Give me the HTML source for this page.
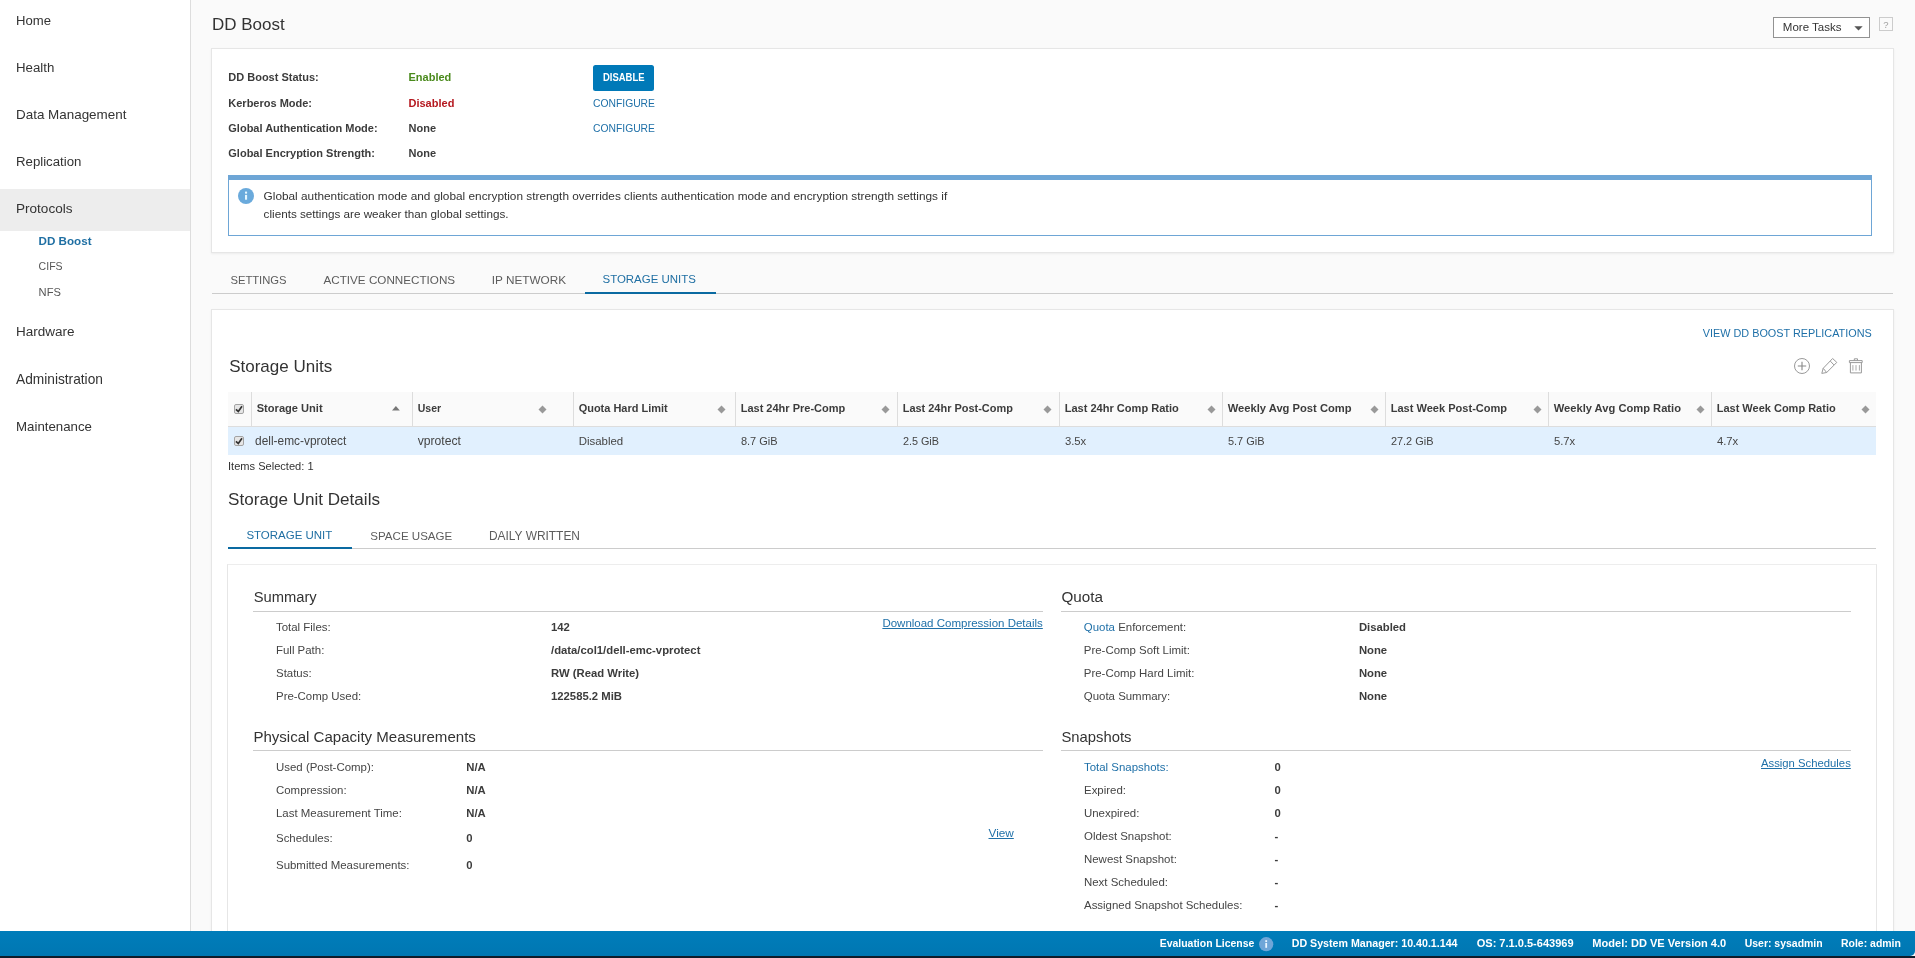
<!DOCTYPE html>
<html><head><meta charset="utf-8"><style>
html,body{margin:0;padding:0;}
body{width:1915px;height:958px;overflow:hidden;position:relative;background:#fafafa;font-family:"Liberation Sans",sans-serif;}
.t{position:absolute;white-space:nowrap;}
.r{position:absolute;}
</style></head><body><div id="wrap" style="position:absolute;left:0;top:0;width:1915px;height:958px;will-change:transform;">
<div class="r" style="left:0px;top:0px;width:190px;height:958px;background:#fff;"></div>
<div class="r" style="left:190px;top:0px;width:1px;height:958px;background:#ddd;"></div>
<div class="r" style="left:0px;top:189px;width:190px;height:42px;background:#ededed;"></div>
<div class="t" style="top:14px;font-size:13.12px;line-height:13.12px;color:#333;left:16.00px;">Home</div>
<div class="t" style="top:61px;font-size:13.25px;line-height:13.25px;color:#333;left:16.00px;">Health</div>
<div class="t" style="top:108px;font-size:13.43px;line-height:13.43px;color:#333;left:16.00px;">Data Management</div>
<div class="t" style="top:155px;font-size:13.22px;line-height:13.22px;color:#333;left:16.00px;">Replication</div>
<div class="t" style="top:202px;font-size:13.55px;line-height:13.55px;color:#333;left:16.00px;">Protocols</div>
<div class="t" style="top:325px;font-size:13.49px;line-height:13.49px;color:#333;left:16.00px;">Hardware</div>
<div class="t" style="top:373px;font-size:13.73px;line-height:13.73px;color:#333;left:16.00px;">Administration</div>
<div class="t" style="top:420px;font-size:13.27px;line-height:13.27px;color:#333;left:16.00px;">Maintenance</div>
<div class="t" style="top:235px;font-size:11.63px;line-height:11.63px;color:#1f6fa3;font-weight:bold;left:38.60px;">DD Boost</div>
<div class="t" style="top:261px;font-size:10.54px;line-height:10.54px;color:#565656;left:38.60px;">CIFS</div>
<div class="t" style="top:287px;font-size:11.15px;line-height:11.15px;color:#565656;left:38.60px;">NFS</div>
<div class="t" style="top:16px;font-size:16.99px;line-height:16.99px;color:#333;left:212.00px;">DD Boost</div>
<div class="r" style="left:1773px;top:17px;width:97px;height:21px;background:#fff;border:1px solid #929292;box-sizing:border-box;"></div>
<div class="t" style="top:22px;font-size:11.52px;line-height:11.52px;color:#333;left:1782.80px;">More Tasks</div>
<svg class="r" style="left:1854px;top:25.5px" width="9" height="5"><path d="M0.3 0.3 L8.7 0.3 L4.5 4.6 Z" fill="#555"/></svg>
<div class="r" style="left:1879px;top:17px;width:14px;height:14px;border:1px solid #ccc;box-sizing:border-box;background:#fafafa;"></div>
<div class="t" style="top:20px;font-size:9.5px;line-height:9.5px;color:#a0a0a0;left:1883.30px;">?</div>
<div class="r" style="left:211px;top:48px;width:1683px;height:205px;background:#fff;border:1px solid #e6e6e6;box-sizing:border-box;box-shadow:0 1px 2px rgba(0,0,0,0.06);"></div>
<div class="t" style="top:72px;font-size:11px;line-height:11px;color:#3c3c3c;font-weight:bold;left:228.30px;">DD Boost Status:</div>
<div class="t" style="top:72px;font-size:11px;line-height:11px;color:#4a8a1c;font-weight:bold;left:408.50px;">Enabled</div>
<div class="t" style="top:98px;font-size:11px;line-height:11px;color:#3c3c3c;font-weight:bold;left:228.30px;">Kerberos Mode:</div>
<div class="t" style="top:98px;font-size:11px;line-height:11px;color:#b5181f;font-weight:bold;left:408.50px;">Disabled</div>
<div class="t" style="top:123px;font-size:11px;line-height:11px;color:#3c3c3c;font-weight:bold;left:228.30px;">Global Authentication Mode:</div>
<div class="t" style="top:123px;font-size:11px;line-height:11px;color:#3c3c3c;font-weight:bold;left:408.50px;">None</div>
<div class="t" style="top:148px;font-size:11px;line-height:11px;color:#3c3c3c;font-weight:bold;left:228.30px;">Global Encryption Strength:</div>
<div class="t" style="top:148px;font-size:11px;line-height:11px;color:#3c3c3c;font-weight:bold;left:408.50px;">None</div>
<div class="r" style="left:593px;top:65px;width:61px;height:26px;background:#0079b8;border-radius:2.5px;"></div>
<div class="t" style="top:72px;font-size:10.6px;line-height:10.6px;color:#fff;font-weight:bold;left:602.60px;transform:scaleX(0.892);transform-origin:0 0;">DISABLE</div>
<div class="t" style="top:99px;font-size:10.33px;line-height:10.33px;color:#1f70a8;left:593.00px;">CONFIGURE</div>
<div class="t" style="top:124px;font-size:10.33px;line-height:10.33px;color:#1f70a8;left:593.00px;">CONFIGURE</div>
<div class="r" style="left:228px;top:175px;width:1644px;height:61px;background:#fff;border:1px solid #6ea6d6;border-top:5px solid #6ea6d6;box-sizing:border-box;"></div>
<svg class="r" style="left:238px;top:188px" width="16" height="16"><circle cx="8" cy="8" r="8" fill="#6aaadc"/><rect x="7" y="6.9" width="2.1" height="4.8" fill="#e6f7ff"/><rect x="7" y="3.4" width="2.1" height="2.3" rx="0.6" fill="#e6f7ff"/></svg>
<div class="t" style="top:191px;font-size:11.82px;line-height:11.82px;color:#333;left:263.60px;">Global authentication mode and global encryption strength overrides clients authentication mode and encryption strength settings if</div>
<div class="t" style="top:208px;font-size:11.69px;line-height:11.69px;color:#333;left:263.60px;">clients settings are weaker than global settings.</div>
<div class="r" style="left:212px;top:293px;width:1681px;height:1px;background:#ccc;"></div>
<div class="t" style="top:275px;font-size:11.24px;line-height:11.24px;color:#5c5c5c;left:230.40px;">SETTINGS</div>
<div class="t" style="top:274px;font-size:11.68px;line-height:11.68px;color:#5c5c5c;left:323.50px;">ACTIVE CONNECTIONS</div>
<div class="t" style="top:274px;font-size:11.78px;line-height:11.78px;color:#5c5c5c;left:491.80px;">IP NETWORK</div>
<div class="t" style="top:274px;font-size:11.46px;line-height:11.46px;color:#1f6fa3;left:602.50px;">STORAGE UNITS</div>
<div class="r" style="left:585px;top:292px;width:131px;height:2px;background:#0a6aa1;"></div>
<div class="r" style="left:211px;top:309px;width:1683px;height:640px;background:#fff;border:1px solid #e6e6e6;box-sizing:border-box;box-shadow:0 1px 2px rgba(0,0,0,0.06);"></div>
<div class="t" style="top:328px;font-size:10.85px;line-height:10.85px;color:#1f70a8;right:43.30px;">VIEW DD BOOST REPLICATIONS</div>
<div class="t" style="top:358px;font-size:17.0px;line-height:17.0px;color:#333;left:229.20px;">Storage Units</div>
<svg class="r" style="left:1793px;top:357px" width="18" height="18"><circle cx="9" cy="9" r="7.5" fill="none" stroke="#9a9a9a" stroke-width="1"/><path d="M4.8 9 H13.2 M9 4.8 V13.2" stroke="#888" stroke-width="1.1"/></svg>
<svg class="r" style="left:1820px;top:357px" width="18" height="18"><path d="M1.8 16.4 L3.2 11.3 L12.6 1.5 L16.8 5.4 L6.7 15.5 Z M3.2 11.3 L6.7 15.5 M10.4 4.2 L13.9 7.9" fill="none" stroke="#9a9a9a" stroke-width="1" stroke-linejoin="round"/></svg>
<svg class="r" style="left:1848px;top:357px" width="16" height="18"><path d="M1.4 3.6 H14.2 V5.6 H1.4 Z M6.3 3.6 V1.8 H9.5 V3.6 M2.4 5.6 V15.9 H13.4 V5.6" fill="none" stroke="#9a9a9a" stroke-width="1"/><path d="M4.9 8.1 V13.6 M8 8.1 V13.6 M11.4 8.1 V13.6" stroke="#aaa" stroke-width="1"/></svg>
<div class="r" style="left:228px;top:392px;width:1648px;height:34px;background:#fafafa;"></div>
<div class="r" style="left:228px;top:426px;width:1648px;height:29px;background:#e1f0fe;"></div>
<div class="r" style="left:228px;top:425.5px;width:1648px;height:1px;background:#ddd;"></div>
<div class="r" style="left:251px;top:392px;width:1px;height:34px;background:#ddd;"></div>
<div class="r" style="left:412px;top:392px;width:1px;height:34px;background:#ddd;"></div>
<div class="r" style="left:573px;top:392px;width:1px;height:34px;background:#ddd;"></div>
<div class="r" style="left:735px;top:392px;width:1px;height:34px;background:#ddd;"></div>
<div class="r" style="left:897px;top:392px;width:1px;height:34px;background:#ddd;"></div>
<div class="r" style="left:1059px;top:392px;width:1px;height:34px;background:#ddd;"></div>
<div class="r" style="left:1222px;top:392px;width:1px;height:34px;background:#ddd;"></div>
<div class="r" style="left:1385px;top:392px;width:1px;height:34px;background:#ddd;"></div>
<div class="r" style="left:1548px;top:392px;width:1px;height:34px;background:#ddd;"></div>
<div class="r" style="left:1711px;top:392px;width:1px;height:34px;background:#ddd;"></div>
<div class="t" style="top:403px;font-size:11.1px;line-height:11.1px;color:#3c3c3c;font-weight:bold;left:256.70px;">Storage Unit</div>
<div class="t" style="top:436px;font-size:11.9px;line-height:11.9px;color:#454545;left:255.10px;">dell-emc-vprotect</div>
<svg class="r" style="left:392px;top:406px" width="8" height="5"><path d="M0 4.5 L3.9 0 L7.8 4.5 Z" fill="#777"/></svg>
<div class="t" style="top:403px;font-size:10.52px;line-height:10.52px;color:#3c3c3c;font-weight:bold;left:417.70px;">User</div>
<div class="t" style="top:435px;font-size:12.17px;line-height:12.17px;color:#454545;left:417.70px;">vprotect</div>
<svg class="r" style="left:538.3px;top:404.5px" width="9" height="9"><path d="M4.5 0.5 L8.5 4.5 L4.5 8.5 L0.5 4.5 Z" fill="#999"/></svg>
<div class="t" style="top:403px;font-size:10.97px;line-height:10.97px;color:#3c3c3c;font-weight:bold;left:578.70px;">Quota Hard Limit</div>
<div class="t" style="top:436px;font-size:11.44px;line-height:11.44px;color:#454545;left:578.70px;">Disabled</div>
<svg class="r" style="left:717.3px;top:404.5px" width="9" height="9"><path d="M4.5 0.5 L8.5 4.5 L4.5 8.5 L0.5 4.5 Z" fill="#999"/></svg>
<div class="t" style="top:403px;font-size:11.0px;line-height:11.0px;color:#3c3c3c;font-weight:bold;left:740.70px;">Last 24hr Pre-Comp</div>
<div class="t" style="top:436px;font-size:11.0px;line-height:11.0px;color:#454545;left:740.90px;">8.7 GiB</div>
<svg class="r" style="left:881.3px;top:404.5px" width="9" height="9"><path d="M4.5 0.5 L8.5 4.5 L4.5 8.5 L0.5 4.5 Z" fill="#999"/></svg>
<div class="t" style="top:403px;font-size:10.96px;line-height:10.96px;color:#3c3c3c;font-weight:bold;left:902.70px;">Last 24hr Post-Comp</div>
<div class="t" style="top:436px;font-size:10.82px;line-height:10.82px;color:#454545;left:902.90px;">2.5 GiB</div>
<svg class="r" style="left:1043.4px;top:404.5px" width="9" height="9"><path d="M4.5 0.5 L8.5 4.5 L4.5 8.5 L0.5 4.5 Z" fill="#999"/></svg>
<div class="t" style="top:403px;font-size:11.05px;line-height:11.05px;color:#3c3c3c;font-weight:bold;left:1064.70px;">Last 24hr Comp Ratio</div>
<div class="t" style="top:436px;font-size:11.27px;line-height:11.27px;color:#454545;left:1064.90px;">3.5x</div>
<svg class="r" style="left:1206.5px;top:404.5px" width="9" height="9"><path d="M4.5 0.5 L8.5 4.5 L4.5 8.5 L0.5 4.5 Z" fill="#999"/></svg>
<div class="t" style="top:403px;font-size:11.19px;line-height:11.19px;color:#3c3c3c;font-weight:bold;left:1227.70px;">Weekly Avg Post Comp</div>
<div class="t" style="top:436px;font-size:10.97px;line-height:10.97px;color:#454545;left:1227.90px;">5.7 GiB</div>
<svg class="r" style="left:1370.0px;top:404.5px" width="9" height="9"><path d="M4.5 0.5 L8.5 4.5 L4.5 8.5 L0.5 4.5 Z" fill="#999"/></svg>
<div class="t" style="top:403px;font-size:11.05px;line-height:11.05px;color:#3c3c3c;font-weight:bold;left:1390.70px;">Last Week Post-Comp</div>
<div class="t" style="top:436px;font-size:10.95px;line-height:10.95px;color:#454545;left:1390.90px;">27.2 GiB</div>
<svg class="r" style="left:1533.2px;top:404.5px" width="9" height="9"><path d="M4.5 0.5 L8.5 4.5 L4.5 8.5 L0.5 4.5 Z" fill="#999"/></svg>
<div class="t" style="top:403px;font-size:11.17px;line-height:11.17px;color:#3c3c3c;font-weight:bold;left:1553.70px;">Weekly Avg Comp Ratio</div>
<div class="t" style="top:436px;font-size:11.27px;line-height:11.27px;color:#454545;left:1553.90px;">5.7x</div>
<svg class="r" style="left:1696.1px;top:404.5px" width="9" height="9"><path d="M4.5 0.5 L8.5 4.5 L4.5 8.5 L0.5 4.5 Z" fill="#999"/></svg>
<div class="t" style="top:403px;font-size:11.0px;line-height:11.0px;color:#3c3c3c;font-weight:bold;left:1716.70px;">Last Week Comp Ratio</div>
<div class="t" style="top:436px;font-size:11.27px;line-height:11.27px;color:#454545;left:1716.90px;">4.7x</div>
<svg class="r" style="left:1861.3px;top:404.5px" width="9" height="9"><path d="M4.5 0.5 L8.5 4.5 L4.5 8.5 L0.5 4.5 Z" fill="#999"/></svg>
<svg class="r" style="left:234px;top:404px" width="10" height="10"><rect x="0.5" y="0.5" width="9" height="9" rx="1.5" fill="#e6e6e6" stroke="#a3a3a3"/><path d="M1.9 5.3 L4.3 7.5 L8 2.3" fill="none" stroke="#333" stroke-width="1.7"/></svg>
<svg class="r" style="left:234px;top:436px" width="10" height="10"><rect x="0.5" y="0.5" width="9" height="9" rx="1.5" fill="#e6e6e6" stroke="#a3a3a3"/><path d="M1.9 5.3 L4.3 7.5 L8 2.3" fill="none" stroke="#333" stroke-width="1.7"/></svg>
<div class="t" style="top:461px;font-size:11.09px;line-height:11.09px;color:#333;left:228.00px;">Items Selected: 1</div>
<div class="t" style="top:491px;font-size:17.09px;line-height:17.09px;color:#333;left:228.10px;">Storage Unit Details</div>
<div class="r" style="left:228px;top:548px;width:1648px;height:1px;background:#ccc;"></div>
<div class="t" style="top:530px;font-size:11.49px;line-height:11.49px;color:#1f6fa3;left:246.40px;">STORAGE UNIT</div>
<div class="t" style="top:531px;font-size:11.56px;line-height:11.56px;color:#5c5c5c;left:370.30px;">SPACE USAGE</div>
<div class="t" style="top:531px;font-size:11.93px;line-height:11.93px;color:#5c5c5c;left:489.00px;">DAILY WRITTEN</div>
<div class="r" style="left:228px;top:547px;width:124px;height:2px;background:#0a6aa1;"></div>
<div class="r" style="left:227px;top:564px;width:1650px;height:400px;background:#fff;border:1px solid #e6e6e6;border-top-color:#ededed;box-sizing:border-box;"></div>
<div class="t" style="top:590px;font-size:14.72px;line-height:14.72px;color:#333;left:253.70px;">Summary</div>
<div class="r" style="left:253px;top:611px;width:790px;height:1px;background:#ccc;"></div>
<div class="t" style="top:729px;font-size:15.06px;line-height:15.06px;color:#333;left:253.40px;">Physical Capacity Measurements</div>
<div class="r" style="left:253px;top:750px;width:790px;height:1px;background:#ccc;"></div>
<div class="t" style="top:589px;font-size:15.23px;line-height:15.23px;color:#333;left:1061.50px;">Quota</div>
<div class="r" style="left:1061px;top:611px;width:790px;height:1px;background:#ccc;"></div>
<div class="t" style="top:730px;font-size:14.81px;line-height:14.81px;color:#333;left:1061.50px;">Snapshots</div>
<div class="r" style="left:1061px;top:750px;width:790px;height:1px;background:#ccc;"></div>
<div class="t" style="top:622px;font-size:11.45px;line-height:11.45px;color:#454545;left:276.00px;">Total Files:</div>
<div class="t" style="top:622px;font-size:11.3px;line-height:11.3px;color:#3c3c3c;font-weight:bold;left:551.00px;">142</div>
<div class="t" style="top:645px;font-size:11.45px;line-height:11.45px;color:#454545;left:276.00px;">Full Path:</div>
<div class="t" style="top:645px;font-size:11.3px;line-height:11.3px;color:#3c3c3c;font-weight:bold;left:551.00px;">/data/col1/dell-emc-vprotect</div>
<div class="t" style="top:668px;font-size:11.45px;line-height:11.45px;color:#454545;left:276.00px;">Status:</div>
<div class="t" style="top:668px;font-size:11.3px;line-height:11.3px;color:#3c3c3c;font-weight:bold;left:551.00px;">RW (Read Write)</div>
<div class="t" style="top:691px;font-size:11.45px;line-height:11.45px;color:#454545;left:276.00px;">Pre-Comp Used:</div>
<div class="t" style="top:691px;font-size:11.3px;line-height:11.3px;color:#3c3c3c;font-weight:bold;left:551.00px;">122585.2 MiB</div>
<div class="t" style="top:618px;font-size:11.5px;line-height:11.5px;color:#1f70a8;right:872.20px;text-decoration:underline;">Download Compression Details</div>
<div class="t" style="top:762px;font-size:11.45px;line-height:11.45px;color:#454545;left:276.00px;">Used (Post-Comp):</div>
<div class="t" style="top:762px;font-size:11.3px;line-height:11.3px;color:#3c3c3c;font-weight:bold;left:466.30px;">N/A</div>
<div class="t" style="top:785px;font-size:11.45px;line-height:11.45px;color:#454545;left:276.00px;">Compression:</div>
<div class="t" style="top:785px;font-size:11.3px;line-height:11.3px;color:#3c3c3c;font-weight:bold;left:466.30px;">N/A</div>
<div class="t" style="top:808px;font-size:11.45px;line-height:11.45px;color:#454545;left:276.00px;">Last Measurement Time:</div>
<div class="t" style="top:808px;font-size:11.3px;line-height:11.3px;color:#3c3c3c;font-weight:bold;left:466.30px;">N/A</div>
<div class="t" style="top:833px;font-size:11.45px;line-height:11.45px;color:#454545;left:276.00px;">Schedules:</div>
<div class="t" style="top:833px;font-size:11.3px;line-height:11.3px;color:#3c3c3c;font-weight:bold;left:466.30px;">0</div>
<div class="t" style="top:860px;font-size:11.45px;line-height:11.45px;color:#454545;left:276.00px;">Submitted Measurements:</div>
<div class="t" style="top:860px;font-size:11.3px;line-height:11.3px;color:#3c3c3c;font-weight:bold;left:466.30px;">0</div>
<div class="t" style="top:827px;font-size:11.77px;line-height:11.77px;color:#1f70a8;left:988.50px;text-decoration:underline;">View</div>
<div class="t" style="top:622px;font-size:11.45px;line-height:11.45px;color:#454545;left:1083.80px;"><span style="color:#1f70a8">Quota</span> Enforcement:</div>
<div class="t" style="top:622px;font-size:11.3px;line-height:11.3px;color:#3c3c3c;font-weight:bold;left:1358.90px;">Disabled</div>
<div class="t" style="top:645px;font-size:11.45px;line-height:11.45px;color:#454545;left:1083.80px;">Pre-Comp Soft Limit:</div>
<div class="t" style="top:645px;font-size:11.3px;line-height:11.3px;color:#3c3c3c;font-weight:bold;left:1358.90px;">None</div>
<div class="t" style="top:668px;font-size:11.45px;line-height:11.45px;color:#454545;left:1083.80px;">Pre-Comp Hard Limit:</div>
<div class="t" style="top:668px;font-size:11.3px;line-height:11.3px;color:#3c3c3c;font-weight:bold;left:1358.90px;">None</div>
<div class="t" style="top:691px;font-size:11.45px;line-height:11.45px;color:#454545;left:1083.80px;">Quota Summary:</div>
<div class="t" style="top:691px;font-size:11.3px;line-height:11.3px;color:#3c3c3c;font-weight:bold;left:1358.90px;">None</div>
<div class="t" style="top:762px;font-size:11.45px;line-height:11.45px;color:#1f70a8;left:1084.00px;">Total Snapshots:</div>
<div class="t" style="top:762px;font-size:11.3px;line-height:11.3px;color:#3c3c3c;font-weight:bold;left:1274.40px;">0</div>
<div class="t" style="top:785px;font-size:11.45px;line-height:11.45px;color:#454545;left:1084.00px;">Expired:</div>
<div class="t" style="top:785px;font-size:11.3px;line-height:11.3px;color:#3c3c3c;font-weight:bold;left:1274.40px;">0</div>
<div class="t" style="top:808px;font-size:11.45px;line-height:11.45px;color:#454545;left:1084.00px;">Unexpired:</div>
<div class="t" style="top:808px;font-size:11.3px;line-height:11.3px;color:#3c3c3c;font-weight:bold;left:1274.40px;">0</div>
<div class="t" style="top:831px;font-size:11.45px;line-height:11.45px;color:#454545;left:1084.00px;">Oldest Snapshot:</div>
<div class="t" style="top:831px;font-size:11.3px;line-height:11.3px;color:#3c3c3c;font-weight:bold;left:1274.40px;">-</div>
<div class="t" style="top:854px;font-size:11.45px;line-height:11.45px;color:#454545;left:1084.00px;">Newest Snapshot:</div>
<div class="t" style="top:854px;font-size:11.3px;line-height:11.3px;color:#3c3c3c;font-weight:bold;left:1274.40px;">-</div>
<div class="t" style="top:877px;font-size:11.45px;line-height:11.45px;color:#454545;left:1084.00px;">Next Scheduled:</div>
<div class="t" style="top:877px;font-size:11.3px;line-height:11.3px;color:#3c3c3c;font-weight:bold;left:1274.40px;">-</div>
<div class="t" style="top:900px;font-size:11.45px;line-height:11.45px;color:#454545;left:1084.00px;">Assigned Snapshot Schedules:</div>
<div class="t" style="top:900px;font-size:11.3px;line-height:11.3px;color:#3c3c3c;font-weight:bold;left:1274.40px;">-</div>
<div class="t" style="top:758px;font-size:11.3px;line-height:11.3px;color:#1f70a8;right:64.20px;text-decoration:underline;">Assign Schedules</div>
<div class="r" style="left:0px;top:931px;width:1915px;height:25px;background:linear-gradient(#007dba,#0077b2);border-bottom-right-radius:5px;"></div>
<div class="r" style="left:0px;top:956px;width:1915px;height:2px;background:#0e1c2a;"></div>
<div class="t" style="top:939px;font-size:10.46px;line-height:10.46px;color:#fff;font-weight:bold;left:1159.70px;">Evaluation License</div>
<div class="t" style="top:938px;font-size:10.67px;line-height:10.67px;color:#fff;font-weight:bold;left:1291.70px;">DD System Manager: 10.40.1.144</div>
<div class="t" style="top:938px;font-size:11.04px;line-height:11.04px;color:#fff;font-weight:bold;left:1476.70px;">OS: 7.1.0.5-643969</div>
<div class="t" style="top:938px;font-size:11.06px;line-height:11.06px;color:#fff;font-weight:bold;left:1592.30px;">Model: DD VE Version 4.0</div>
<div class="t" style="top:939px;font-size:10.47px;line-height:10.47px;color:#fff;font-weight:bold;left:1744.70px;">User: sysadmin</div>
<div class="t" style="top:939px;font-size:10.48px;line-height:10.48px;color:#fff;font-weight:bold;left:1841.00px;">Role: admin</div>
<svg class="r" style="left:1259px;top:937px" width="15" height="15"><circle cx="7.2" cy="7.2" r="7.1" fill="#6fa6d8"/><rect x="6.3" y="5.9" width="1.8" height="4.9" fill="#eaf6ff"/><rect x="6.3" y="3.2" width="1.8" height="1.8" fill="#eaf6ff"/></svg>
</div></body></html>
